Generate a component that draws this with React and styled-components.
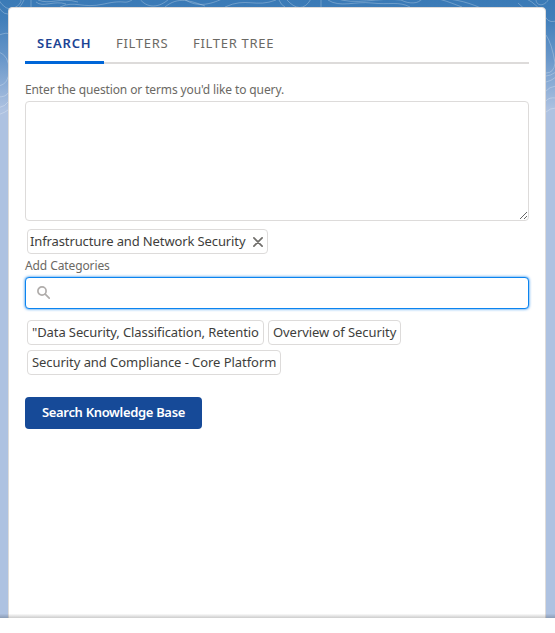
import React from 'react';
import styled, { createGlobalStyle } from 'styled-components';

const GlobalStyle = createGlobalStyle`
  * { box-sizing: border-box; }
  html { background: #fff; }
  body { margin: 0; background: #fff; overflow: hidden; font-family: "Noto Sans", "Open Sans", sans-serif; font-size: 13px; color: #3e3e3c; }
`;

const Viewport = styled.main`
  position: relative;
  height: 618px;
  padding: 7px 9px 0 8px;
  overflow: hidden;
  background: linear-gradient(#3a7ab6 0, #427fba 20px, #6b98ca 60px, #aec2e1 110px, #aec2e1 100%);
  &::after {
    content: "";
    position: absolute;
    inset: auto 0 0 0;
    height: 4px;
    background: linear-gradient(rgba(0,0,0,.02), rgba(0,0,0,.2));
  }
`;

const Contours = styled.svg`
  position: absolute;
  top: 0;
  left: 0;
  fill: none;
  stroke: rgba(255,255,255,.26);
  stroke-width: 1;
`;

const Card = styled.section`
  position: relative;
  height: 620px;
  padding: 16px;
  border: 1px solid #dddbda;
  border-radius: 4px;
  background: #fff;
`;

const Tabs = styled.nav`
  display: flex;
  height: 40px;
  border-bottom: 2px solid #dddbda;
`;

const Tab = styled.a`
  height: 40px;
  padding: 0 12px;
  line-height: 38px;
  font-size: 13px;
  letter-spacing: ${p => p.$spacing};
  white-space: nowrap;
  color: ${p => (p.$active ? '#1b4394' : '#6b6964')};
  font-weight: ${p => (p.$active ? 600 : 400)};
  border-bottom: ${p => (p.$active ? '3px solid #0066d8' : '0')};
  width: ${p => p.$width}px;
`;

const Label = styled.label`
  display: block;
  height: 18px;
  line-height: 18px;
  margin-top: ${p => p.$top}px;
  font-size: 12px;
  letter-spacing: ${p => p.$spacing};
  color: #6b6964;
  white-space: nowrap;
`;

const Query = styled.textarea`
  display: block;
  width: 100%;
  height: 120px;
  margin-top: 2px;
  padding: 8px 12px;
  border: 1px solid #dddbda;
  border-radius: 4px;
  background: #fff;
  resize: vertical;
  outline: none;
`;

const Pills = styled.div`
  display: flex;
  flex-wrap: wrap;
  gap: 5px 4px;
  margin: ${p => p.$top}px 0 0 2px;
`;

const Pill = styled.span`
  display: flex;
  align-items: center;
  justify-content: space-between;
  width: ${p => p.$width}px;
  height: 25px;
  padding: 0 4px 0 ${p => p.$left || 4}px;
  border: 1px solid #dddbda;
  border-radius: 4px;
  background: #fff;
  line-height: 23px;
  letter-spacing: ${p => p.$spacing};
  white-space: nowrap;
  svg { flex: none; margin-top: 1px; }
`;

const SearchField = styled.div`
  display: flex;
  align-items: center;
  height: 32px;
  margin-top: 2px;
  padding-left: 11px;
  border: 1px solid #0b84f0;
  border-radius: 4px;
  background: #fff;
  box-shadow: 0 0 3px #0b7ce6;
  svg { margin-bottom: 1px; }
`;

const Input = styled.input`
  flex: 1;
  min-width: 0;
  border: 0;
  outline: 0;
  background: transparent;
`;

const Submit = styled.button`
  display: block;
  width: 177px;
  height: 32px;
  margin-top: 22px;
  padding: 0 0 2px;
  border: 0;
  border-radius: 4px;
  background: #164a98;
  color: #fff;
  font: 600 13px/30px "Noto Sans", "Open Sans", sans-serif;
  letter-spacing: ${p => p.$spacing};
`;

const tabs = [
  ['SEARCH', 79, '0.8px'],
  ['FILTERS', 77, '0.7px'],
  ['FILTER TREE', 106, '0.7px'],
];

const suggestions = [
  ['"Data Security, Classification, Retentio', 237, '-0.1px'],
  ['Overview of Security', 133, '-0.07px'],
  ['Security and Compliance - Core Platform', 254, '-0.06px'],
];

export default function App() {
  return (
    <>
      <GlobalStyle />
      <Viewport>
        <Contours width="555" height="130" aria-hidden="true">
          <path d="M-2 6Q4 17 12 13T24 0M-2-1Q6 12 14 8T21-1M31 0v8M36 2C43 8 54 0 66 4M38 0C50 5 60-3 78 2M60 7C75 0 82 9 104 4S123 5 132 0M139-2C147 9 159 8 169-1M165 7C178-4 191 1 205 6M184-1C198 9 214 3 224-2M225 7C246-3 256 8 276 0" />
          <path d="M279 0q2 5 6 7M286-1q15 17 25 0M321 0v7M328 0c12 8 27 1 44 3s27-2 38 4M335-2c20 8 43-1 66 2 9 5 21 3 20-2M420 0c15-5 28 2 42 7M437-2c20 1 34 5 48 12M518 3q12 12 27 17M525-2q14 7 21 20 4 6 12 2M536 0c1 8 11 5 13-2" />
          <path d="M-1 35q9-3 9-1M-1 52Q9 56 9 70T-1 86M-2 97q8 0 10-4M-2 108q8-2 10-6M-2 115q8-3 10-5M546 35q6 9 9 28-1 10-9 10M546 76q4 0 10-4M546 82q5-1 10-5M546 91q3-4 10-5M546 101q3-4 10-3M546 112q4-4 10-4" />
        </Contours>
        <Card>
          <Tabs>
            {tabs.map(([name, width, spacing], i) => (
              <Tab key={name} $active={i === 0} $width={width} $spacing={spacing}>{name}</Tab>
            ))}
          </Tabs>
          <Label htmlFor="query" $top={17} $spacing="-0.12px">Enter the question or terms you'd like to query.</Label>
          <Query id="query" />
          <Pills $top={8}>
            <Pill $width={241} $left={2} $spacing="-0.12px">
              Infrastructure and Network Security
              <svg width="10" height="10" viewBox="0 0 10 10" fill="none" stroke="#706e6b" strokeWidth="1.7" strokeLinecap="round"><path d="m.9.9 8.2 8.2m0-8.2L.9 9.1" /></svg>
            </Pill>
          </Pills>
          <Label htmlFor="category" $top={3} $spacing="-0.1px">Add Categories</Label>
          <SearchField>
            <svg width="13" height="13" viewBox="0 0 13 13" fill="none" stroke="#b0adab" strokeWidth="1.7" strokeLinecap="round"><circle cx="5" cy="5" r="4.1" /><path d="m8.2 8.2 4 4" /></svg>
            <Input id="category" />
          </SearchField>
          <Pills $top={11}>
            {suggestions.map(([name, width, spacing]) => (
              <Pill key={name} $width={width} $spacing={spacing}>{name}</Pill>
            ))}
          </Pills>
          <Submit $spacing="-0.33px">Search Knowledge Base</Submit>
        </Card>
      </Viewport>
    </>
  );
}
